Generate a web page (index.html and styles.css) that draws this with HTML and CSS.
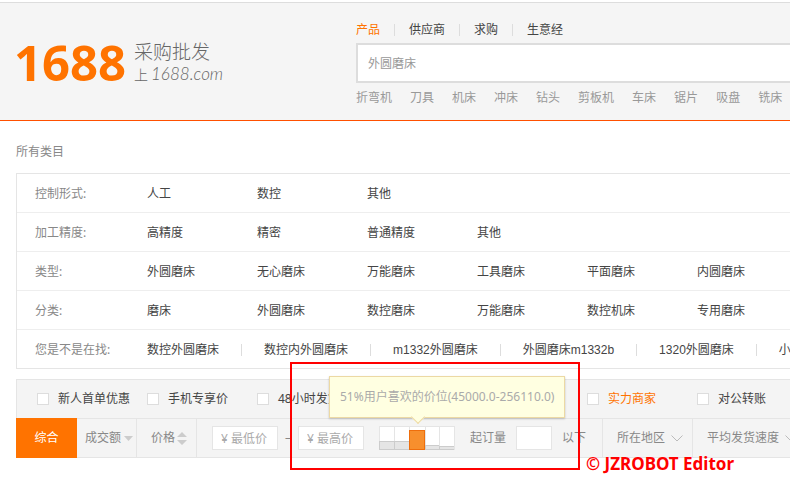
FILE: index.html
```html
<!DOCTYPE html>
<html lang="zh-CN">
<head>
    <meta charset="utf-8">
    <title>外圆磨床 - 1688</title>
    <link rel="stylesheet" href="styles.css">
</head>
<body>
<header class="header">
    <a class="logo" href="#">
        <svg width="212" height="52" viewBox="0 0 212 52">
            <text class="logo-name" x="-2" y="43">1688</text>
            <text class="logo-slogan" x="118" y="21">采购批发</text>
            <text class="logo-slogan logo-small" x="118" y="42">上</text>
            <text class="logo-slogan logo-domain" x="135" y="42">1688.com</text>
        </svg>
    </a>
    <div class="search">
        <nav class="tabs">
            <a class="active" href="#">产品</a>
            <a href="#">供应商</a>
            <a href="#">求购</a>
            <a href="#">生意经</a>
        </nav>
        <input class="search-input" type="text" value="外圆磨床" aria-label="搜索">
        <nav class="hot-words">
            <a href="#">折弯机</a>
            <a href="#">刀具</a>
            <a href="#">机床</a>
            <a href="#">冲床</a>
            <a href="#">钻头</a>
            <a href="#">剪板机</a>
            <a href="#">车床</a>
            <a href="#">锯片</a>
            <a href="#">吸盘</a>
            <a href="#">铣床</a>
        </nav>
    </div>
</header>

<main class="main">
    <div class="crumb">所有类目</div>

    <dl class="props">
        <div class="prop">
            <dt>控制形式:</dt>
            <dd><a href="#">人工</a><a href="#">数控</a><a href="#">其他</a></dd>
        </div>
        <div class="prop">
            <dt>加工精度:</dt>
            <dd><a href="#">高精度</a><a href="#">精密</a><a href="#">普通精度</a><a href="#">其他</a></dd>
        </div>
        <div class="prop">
            <dt>类型:</dt>
            <dd><a href="#">外圆磨床</a><a href="#">无心磨床</a><a href="#">万能磨床</a><a href="#">工具磨床</a><a href="#">平面磨床</a><a href="#">内圆磨床</a></dd>
        </div>
        <div class="prop">
            <dt>分类:</dt>
            <dd><a href="#">磨床</a><a href="#">外圆磨床</a><a href="#">数控磨床</a><a href="#">万能磨床</a><a href="#">数控机床</a><a href="#">专用磨床</a></dd>
        </div>
        <div class="prop related">
            <dt>您是不是在找:</dt>
            <dd><a href="#">数控外圆磨床</a><a href="#">数控内外圆磨床</a><a href="#">m1332外圆磨床</a><a href="#">外圆磨床m1332b</a><a href="#">1320外圆磨床</a><a href="#">小</a></dd>
        </div>
    </dl>

    <section class="filter">
        <div class="options">
            <label><input type="checkbox">新人首单优惠</label>
            <label><input type="checkbox">手机专享价</label>
            <label><input type="checkbox">48小时发货</label>
            <label class="strength"><input type="checkbox">实力商家</label>
            <label><input type="checkbox">对公转账</label>
        </div>
        <div class="sort">
            <button class="sort-item current" type="button">综合</button>
            <button class="sort-item amount" type="button">成交额
                <svg width="9" height="5" viewBox="0 0 9 5"><path d="M0 0h9L4.500 5z" fill="#ccc"/></svg>
            </button>
            <button class="sort-item price" type="button">价格
                <svg width="10" height="13" viewBox="0 0 10 13"><path d="M0 5L5 0l5 5zM0 8h10l-5 5z" fill="#ccc"/></svg>
            </button>
            <div class="range">
                <input class="box" type="text" placeholder="¥ 最低价" aria-label="最低价">
                <span class="dash">–</span>
                <input class="box" type="text" placeholder="¥ 最高价" aria-label="最高价">
                <div class="chart">
                    <div class="col"><i style="height: 37%"></i></div>
                    <div class="col"><i style="height: 37%"></i></div>
                    <div class="col hot"><i style="height: 83%"></i></div>
                    <div class="col"><i style="height: 21%"></i></div>
                    <div class="col"><i style="height: 16%"></i></div>
                    <div class="tip">51%用户喜欢的价位(45000.0-256110.0)</div>
                </div>
                <label class="quantity">起订量<input class="box" type="text">以下</label>
            </div>
            <button class="sort-item drop" type="button">所在地区
                <svg width="12" height="7" viewBox="0 0 12 7"><path d="M.5.5L6 6 11.500.5" fill="none" stroke="#bbb"/></svg>
            </button>
            <button class="sort-item drop" type="button">平均发货速度
                <svg width="12" height="7" viewBox="0 0 12 7"><path d="M.5.5L6 6 11.500.5" fill="none" stroke="#bbb"/></svg>
            </button>
        </div>
        <div class="mark"></div>
        <div class="credit">© JZROBOT Editor</div>
    </section>
</main>
</body>
</html>
```
FILE: styles.css
```css
* {
    box-sizing: border-box;
}
body {
    min-height: 100vh;
    margin: 0;
    padding-top: 2px;
    overflow-x: hidden;
    background: #fff;
    color: #444;
    font: 12px/20px "Noto Sans", "Noto Sans CJK SC", sans-serif;
}
a {
    color: inherit;
    text-decoration: none;
    white-space: nowrap;
}
button,
input {
    margin: 0;
    font: inherit;
    color: inherit;
    border-radius: 0;
}

/* header */
.header {
    display: grid;
    grid-template-columns: 340px 1fr;
    padding: 17px 0 12px 16px;
    background: #f5f5f5;
    border-top: 1px solid #ddd;
    border-bottom: 1px solid #ff5000;
}
.logo {
    padding-top: 18px;
}
.logo svg {
    display: block;
    overflow: visible;
}
.logo-name {
    font: 700 49px "Noto Sans", sans-serif;
    fill: #ff7300;
}
.logo-slogan {
    font: 300 19px "Noto Sans CJK SC", sans-serif;
    fill: #666;
}
.logo-small {
    font-size: 14px;
}
.logo-domain {
    font: italic 300 17px Lato, sans-serif;
}
.search {
    min-width: 0;
}
.tabs {
    display: flex;
    margin-bottom: 3px;
}
.tabs a {
    display: flex;
    align-items: center;
}
.tabs a + a::before {
    content: "";
    width: 1px;
    height: 12px;
    margin: 0 14px;
    background: #ddd;
}
.tabs .active {
    color: #ff7300;
}
.search-input {
    display: block;
    width: 100%;
    height: 40px;
    padding: 0 10px;
    background: #fff;
    border: 2px solid #ddd;
    border-right: 0;
    color: #999;
}
.hot-words {
    display: flex;
    gap: 18px;
    margin-top: 5px;
    color: #999;
    overflow: hidden;
}

/* categories */
.main {
    padding-left: 16px;
}
.crumb {
    margin: 21px 0 11px;
    color: #888;
}
.props {
    margin: 0 0 10px;
    border: 1px solid #e5e5e5;
    border-right: 0;
}
.prop {
    display: flex;
    padding: 10px 0 8px 18px;
    overflow: hidden;
}
.prop + .prop {
    border-top: 1px solid #eee;
}
.prop dt {
    flex: 0 0 112px;
    color: #888;
}
.prop dd {
    display: flex;
    margin: 0;
}
.prop dd a {
    width: 110px;
}
.related dd {
    font-family: "Liberation Sans", "Noto Sans CJK SC", sans-serif;
}
.related dd a {
    display: flex;
    align-items: center;
    width: auto;
}
.related a + a::before {
    content: "";
    width: 1px;
    height: 12px;
    margin: 0 22px;
    background: #ddd;
}

/* filter bar */
.filter {
    position: relative;
    background: #f4f4f4;
    border: 1px solid #e5e5e5;
    border-right: 0;
}
.options {
    display: grid;
    grid-template-columns: repeat(7, 110px);
    padding: 9px 0 9px 20px;
}
.options label {
    display: flex;
    align-items: center;
    gap: 9px;
    white-space: nowrap;
}
.options input {
    appearance: none;
    width: 12px;
    height: 12px;
    background: #fff;
    border: 1px solid #ddd;
}
.options input:checked {
    background: #ff7300;
}
.options .strength {
    grid-column: 6;
    color: #ff7300;
}
.sort {
    display: flex;
    height: 39px;
    border-top: 1px solid #e5e5e5;
    color: #888;
}
.sort-item {
    display: flex;
    flex: none;
    align-items: center;
    padding: 0;
    background: none;
    border: 0;
    border-right: 1px solid #e5e5e5;
    white-space: nowrap;
    cursor: pointer;
}
.current {
    justify-content: center;
    width: 61px;
    margin: -1px 0 -1px -1px;
    background: #ff7300;
    border: 0;
    color: #fff;
}
.amount {
    gap: 3px;
    width: 60px;
    padding-left: 8px;
}
.price {
    gap: 2px;
    width: 60px;
    padding-left: 14px;
}
.drop {
    gap: 6px;
    padding: 0 9px 0 14px;
}
.range {
    display: flex;
    flex: none;
    align-items: center;
    padding: 0 16px 0 15px;
    border-right: 1px solid #e5e5e5;
}
.box {
    width: 66px;
    height: 24px;
    padding: 0 8px;
    background: #fff;
    border: 1px solid #e5e5e5;
}
.box::placeholder {
    color: #aaa;
}
.dash {
    width: 20px;
    text-align: center;
}
.chart {
    position: relative;
    display: flex;
    width: 76px;
    height: 24px;
    margin: 0 15px;
    background: #fff;
    border-right: 1px solid #e5e5e5;
}
.col {
    display: flex;
    flex: 1;
    align-items: flex-end;
    box-shadow: inset 1px 1px #e5e5e5;
}
.col i {
    width: 100%;
    background: #e5e5e5;
    border: 1px solid #ccc;
    border-right: 0;
}
.hot i {
    flex: none;
    width: 16px;
    background: #f78f2d;
    border: 1px solid #ee6e0c;
    z-index: 1;
}
.quantity {
    display: flex;
    align-items: center;
    gap: 10px;
    white-space: nowrap;
}
.quantity .box {
    width: 36px;
}

/* price tooltip over the chart */
.tip {
    position: absolute;
    left: -50px;
    bottom: 32px;
    padding: 10px;
    background: #ffffe1;
    border: 1px solid #ecd9a4;
    box-shadow: 0 1px 2px rgba(0, 0, 0, .2);
    color: #aaa;
    white-space: nowrap;
}
.tip::after {
    content: "";
    position: absolute;
    left: 83px;
    bottom: -5px;
    width: 9px;
    height: 9px;
    background: #ffffe1;
    border: solid #ecd9a4;
    border-width: 0 1px 1px 0;
    transform: rotate(45deg);
}

/* red frame and credit over the page */
.mark {
    position: absolute;
    top: -18px;
    left: 273px;
    width: 290px;
    height: 108px;
    border: 2px solid #f00;
    pointer-events: none;
}
.credit {
    position: absolute;
    top: 74px;
    left: 569px;
    color: #f00;
    font-size: 17px;
    font-weight: 700;
    white-space: nowrap;
}
```
